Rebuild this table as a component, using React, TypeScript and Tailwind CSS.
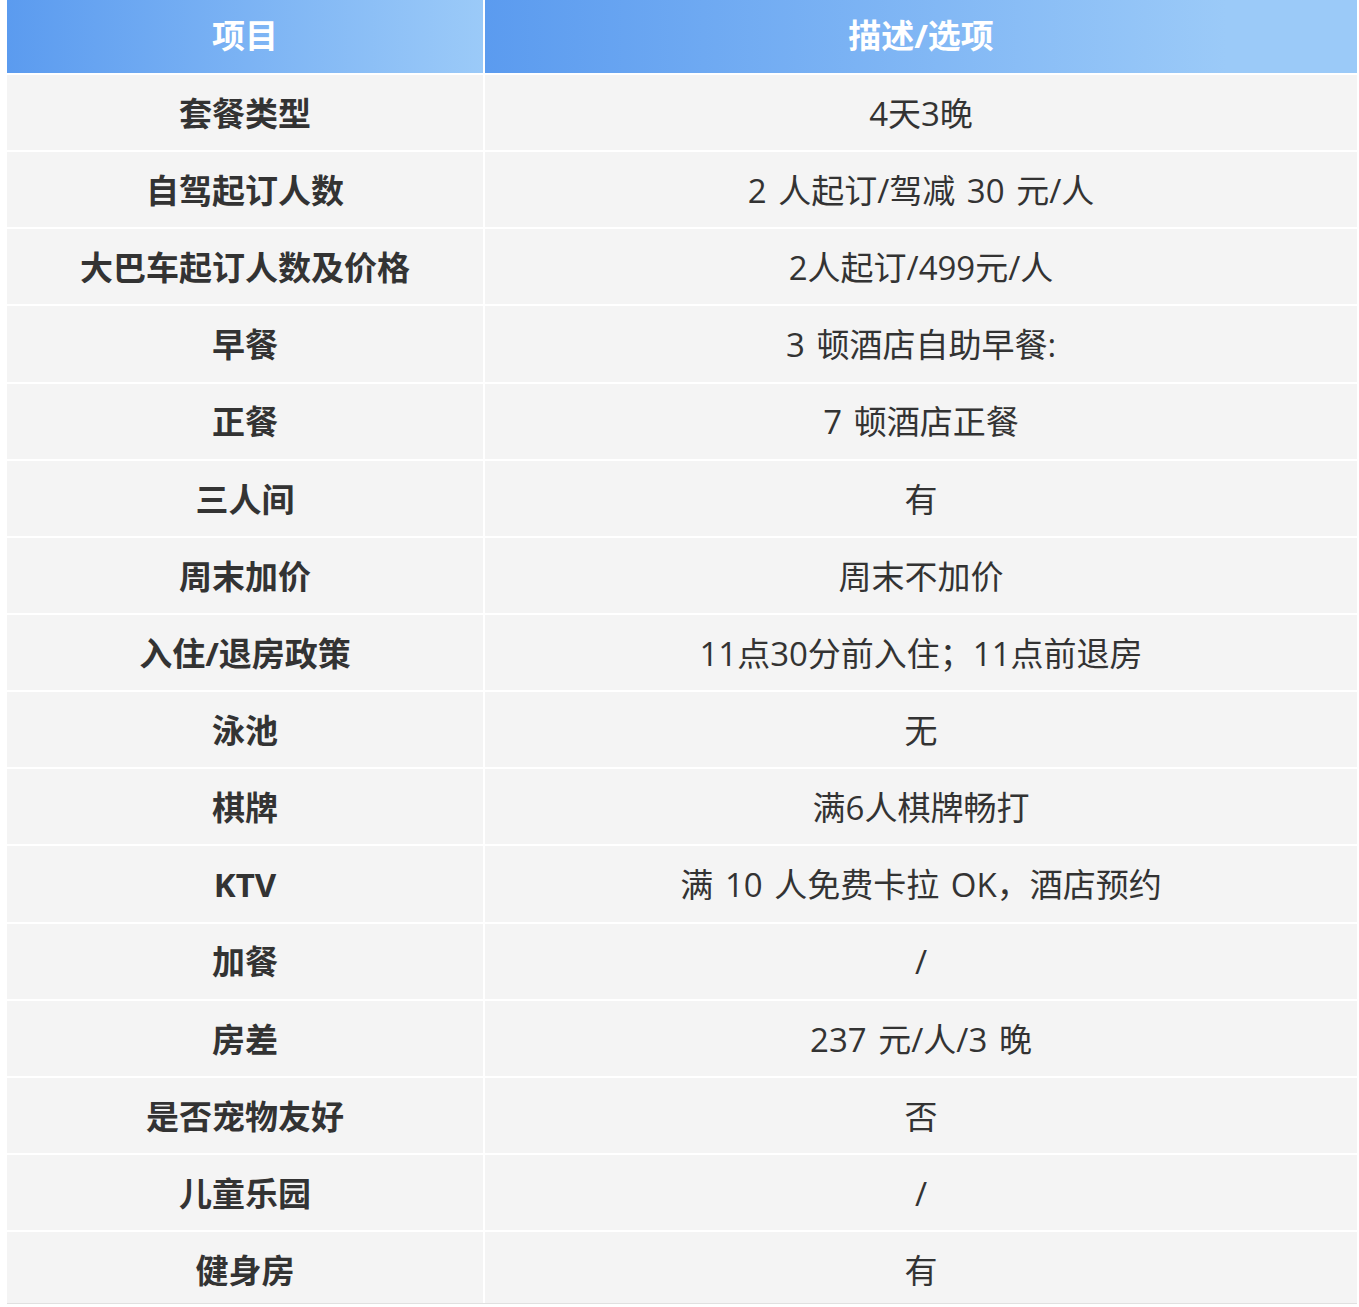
const rows: [string, string][] = [
  ["套餐类型", "4天3晚"],
  ["自驾起订人数", "2 人起订/驾减 30 元/人"],
  ["大巴车起订人数及价格", "2人起订/499元/人"],
  ["早餐", "3 顿酒店自助早餐:"],
  ["正餐", "7 顿酒店正餐"],
  ["三人间", "有"],
  ["周末加价", "周末不加价"],
  ["入住/退房政策", "11点30分前入住；11点前退房"],
  ["泳池", "无"],
  ["棋牌", "满6人棋牌畅打"],
  ["KTV", "满 10 人免费卡拉 OK，酒店预约"],
  ["加餐", "/"],
  ["房差", "237 元/人/3 晚"],
  ["是否宠物友好", "否"],
  ["儿童乐园", "/"],
  ["健身房", "有"],
];

const font = "font-['Open_Sans','Noto_Sans_CJK_SC',sans-serif]";

export default function App() {
  return (
    <div className={`min-h-screen bg-white ${font}`}>
      <div className="ml-[7px] w-[1350px] flex flex-col gap-[2px] border-b border-[#e0e0e0]">
        <div className="grid grid-cols-[476px_872px] gap-[2px] h-[73px] text-white text-[33px] font-bold">
          <div className="flex items-center justify-center pb-[2px] bg-linear-to-r from-[#5b9bef] to-[#9bcaf8]">
            项目
          </div>
          <div className="flex items-center justify-center pb-[2px] bg-linear-to-r from-[#5b9bef] to-[#9bcaf8] to-85%">
            描述/选项
          </div>
        </div>
        {rows.map(([k, v], i) => {
          const last = i === rows.length - 1;
          const pad = last ? "pt-[6px]" : "pt-[2px]";
          return (
            <div
              key={k}
              className={
                last
                  ? "grid grid-cols-[476px_872px] gap-[2px] h-[71px] text-[#333] text-[33px]"
                  : "grid grid-cols-[476px_872px] gap-[2px] h-[75.15px] text-[#333] text-[33px]"
              }
            >
              <div className={`flex items-center justify-center bg-[#f4f4f4] font-bold ${pad}`}>
                {k}
              </div>
              <div className={`flex items-center justify-center bg-[#f4f4f4] [word-spacing:3px] ${pad}`}>
                {v}
              </div>
            </div>
          );
        })}
      </div>
    </div>
  );
}
